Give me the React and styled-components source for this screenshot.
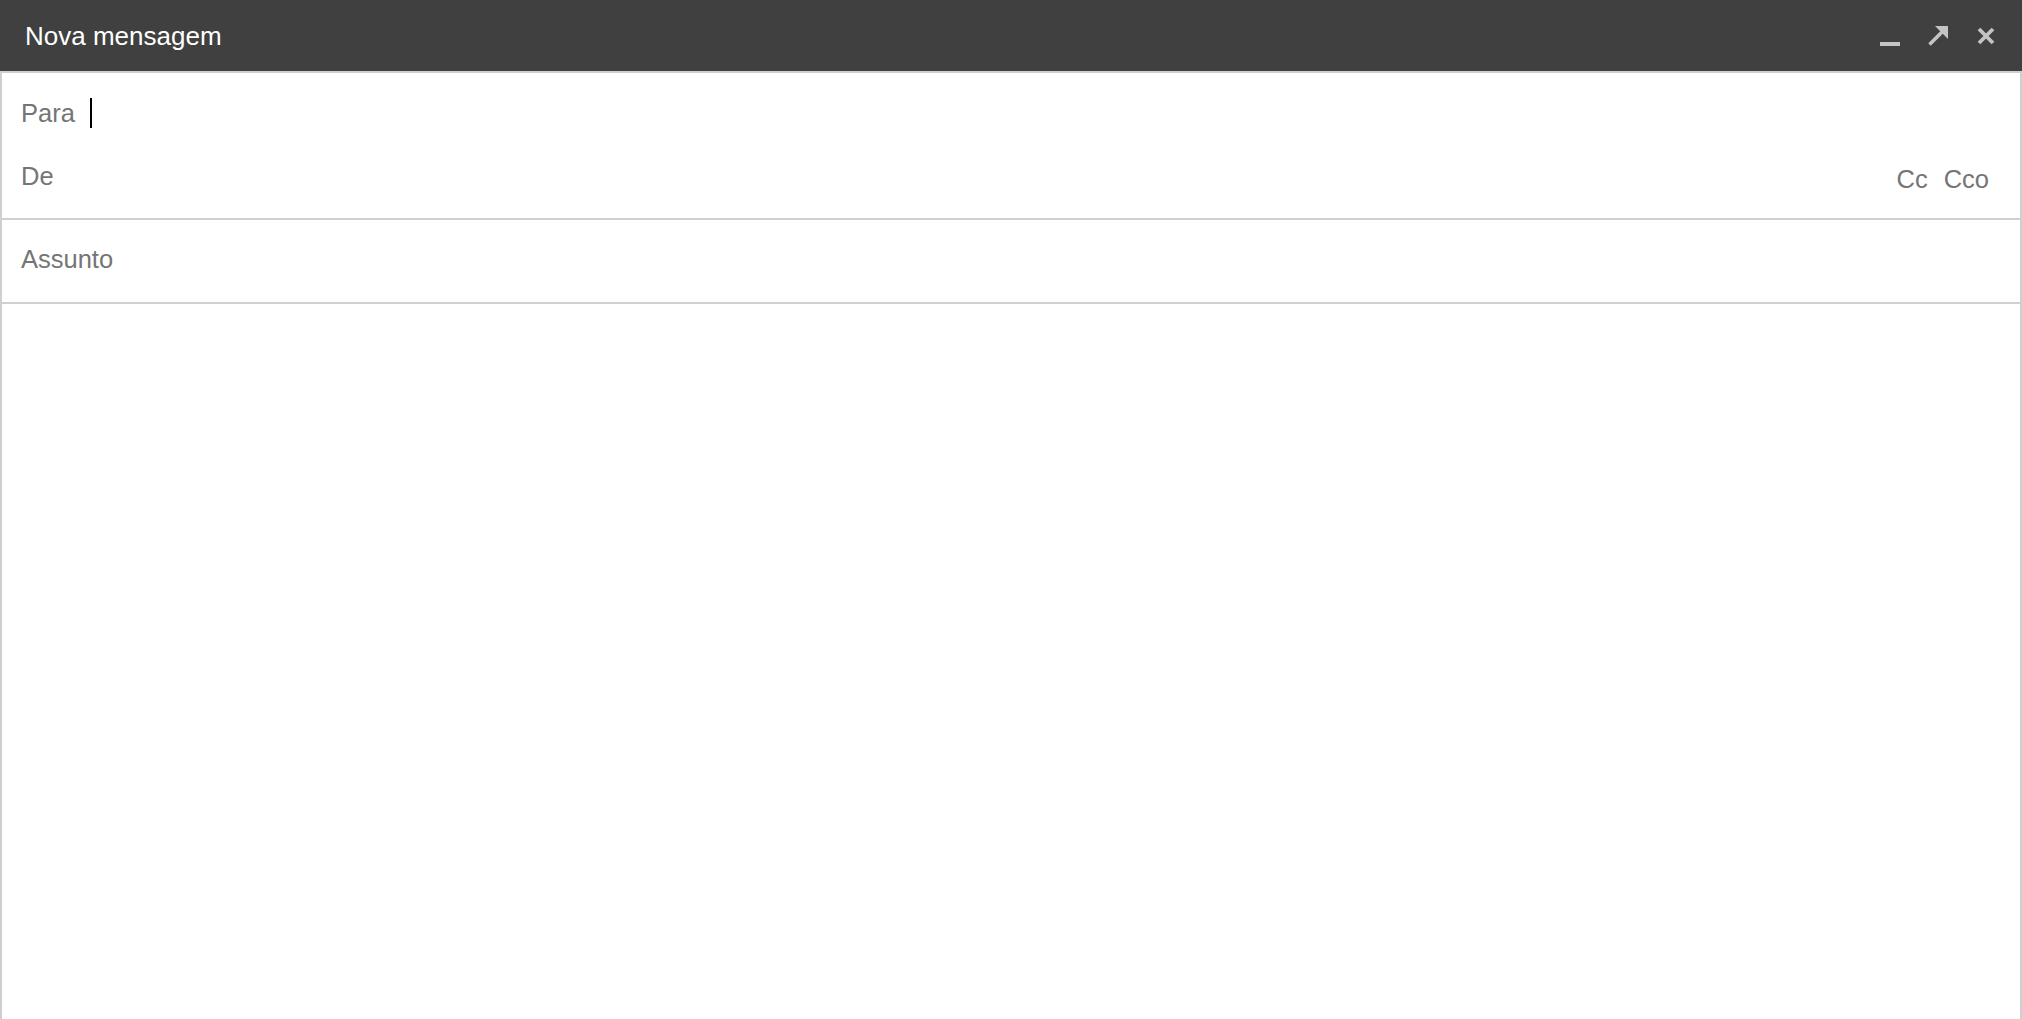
import React from 'react';
import styled, { createGlobalStyle } from 'styled-components';

const GlobalStyle = createGlobalStyle`
  html, body {
    margin: 0;
    padding: 0;
    background: #ffffff;
  }
  body {
    font-family: "Liberation Sans", Arial, sans-serif;
  }
`;

const Compose = styled.div`
  width: 100vw;
  height: 100vh;
  display: flex;
  flex-direction: column;
  overflow: hidden;
`;

const Header = styled.div`
  height: 71px;
  flex-shrink: 0;
  background-color: #404040;
  display: flex;
  align-items: center;
  justify-content: space-between;
  padding: 0 25px 0 25px;
  box-sizing: border-box;
`;

const Title = styled.span`
  color: #ffffff;
  font-size: 26px;
  line-height: 32px;
`;

const Controls = styled.div`
  display: flex;
  align-items: center;
  gap: 26px;
  padding-top: 1px;
`;

const IconButton = styled.button`
  width: 22px;
  height: 22px;
  padding: 0;
  border: 0;
  background: none;
  display: flex;
  cursor: pointer;
`;

const Body = styled.div`
  flex: 1;
  display: flex;
  flex-direction: column;
  border: 2px solid #cfcfcf;
  border-bottom: 0;
`;

const Section = styled.div`
  display: flex;
  flex-direction: column;
  gap: ${p => p.$gap || 0}px;
  padding: ${p => p.$top}px 31px ${p => p.$bottom}px 19px;
  border-bottom: 2px solid #d0d0d0;
`;

const Row = styled.div`
  height: 32px;
  display: flex;
  align-items: flex-start;
  justify-content: space-between;
`;

const Field = styled.div`
  display: flex;
  align-items: center;
`;

const Label = styled.span`
  color: #757575;
  font-size: 25.5px;
  line-height: 32px;
`;

const Caret = styled.span`
  display: inline-block;
  width: 2px;
  height: 30px;
  margin-left: 15px;
  background-color: #000000;
`;

const CopyLinks = styled.div`
  display: flex;
  gap: 16px;
  margin-top: 3px;
`;

const Link = styled(Label)`
  cursor: pointer;
`;

const Message = styled.div`
  flex: 1;
`;

function App() {
  return (
    <>
      <GlobalStyle />
      <Compose>
        <Header>
          <Title>Nova mensagem</Title>
          <Controls>
            <IconButton aria-label="Minimizar">
              <svg width="22" height="22" viewBox="0 0 22 22">
                <rect x="1" y="17" width="20" height="4" fill="#c4c4c4" />
              </svg>
            </IconButton>
            <IconButton aria-label="Tela cheia">
              <svg width="22" height="22" viewBox="0 0 22 22">
                <line x1="2.5" y1="19.5" x2="15" y2="7" stroke="#c4c4c4" strokeWidth="3.6" />
                <polygon points="8,1 21,1 21,14" fill="#c4c4c4" />
              </svg>
            </IconButton>
            <IconButton aria-label="Fechar">
              <svg width="22" height="22" viewBox="0 0 22 22">
                <path d="M4 4 L18 18 M18 4 L4 18" stroke="#c4c4c4" strokeWidth="3.8" />
              </svg>
            </IconButton>
          </Controls>
        </Header>
        <Body>
          <Section $top={24} $bottom={26} $gap={31}>
            <Row>
              <Field>
                <Label>Para</Label>
                <Caret />
              </Field>
            </Row>
            <Row>
              <Label>De</Label>
              <CopyLinks>
                <Link>Cc</Link>
                <Link>Cco</Link>
              </CopyLinks>
            </Row>
          </Section>
          <Section $top={23} $bottom={27}>
            <Label>Assunto</Label>
          </Section>
          <Message />
        </Body>
      </Compose>
    </>
  );
}

export default App;
